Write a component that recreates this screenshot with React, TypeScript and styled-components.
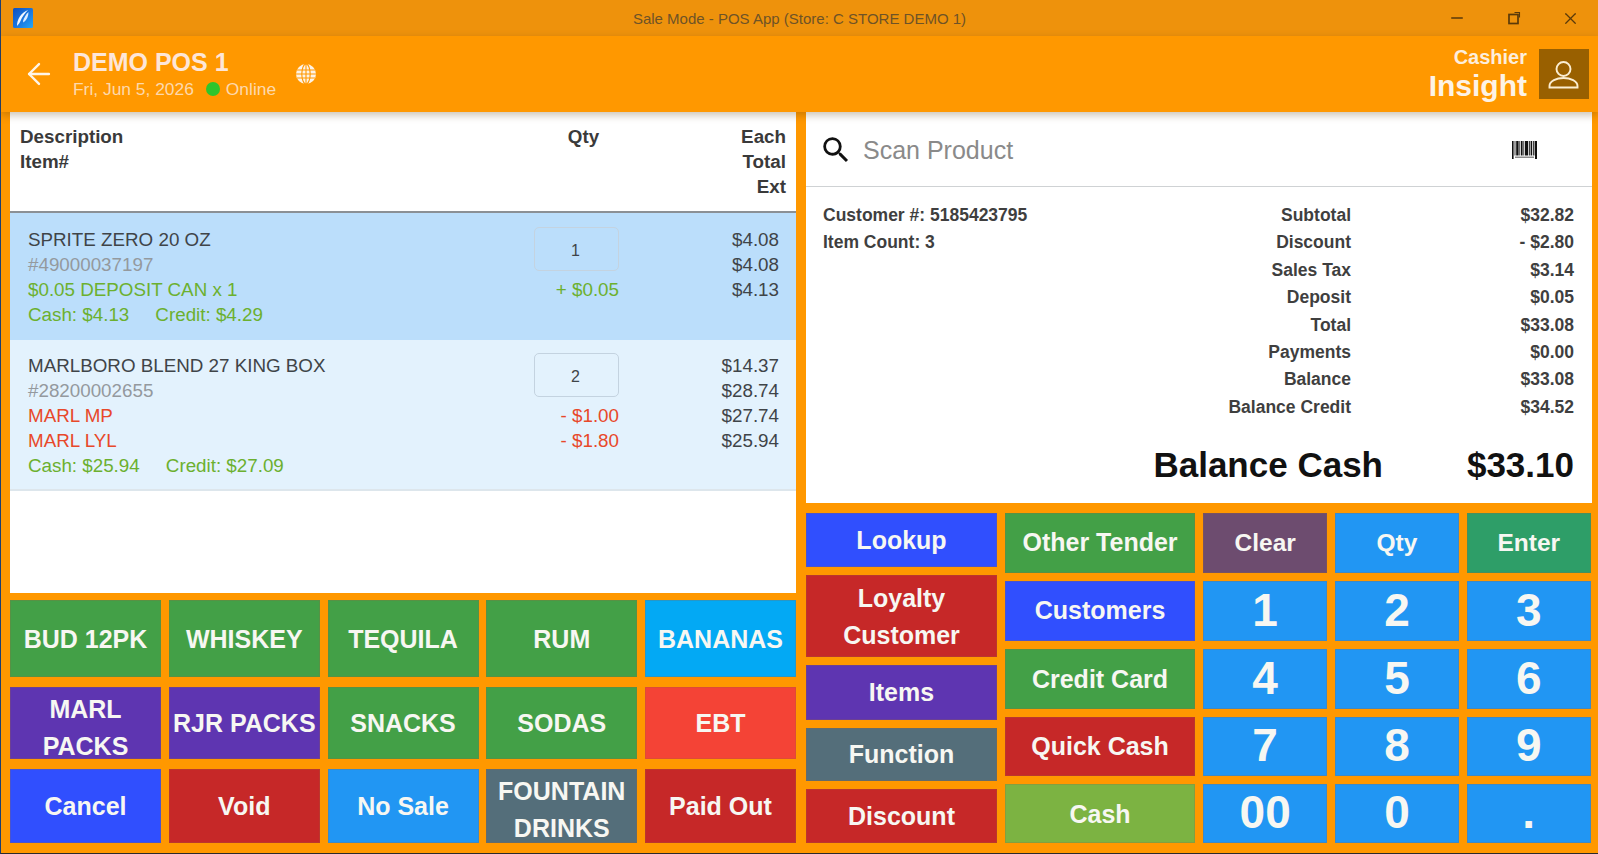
import React from "react";
import styled, { createGlobalStyle } from "styled-components";
import { ArrowLeft, Minus, X } from "lucide-react";
import { MdSearch } from "react-icons/md";

const GlobalStyle = createGlobalStyle`
	html, body {
		margin: 0;
		padding: 0;
		height: 100%;
		background: #ff9800;
		overflow: hidden;
	}
	* {
		box-sizing: border-box;
	}
`;

const Win = styled.div`
	width: 1598px;
	height: 854px;
	display: flex;
	flex-direction: column;
	background: #ff9800;
	border-left: 1px solid #1c3f73;
	border-bottom: 1px solid #2a2a2a;
	font-family: "Liberation Sans", Arial, sans-serif;
`;

const TitleBar = styled.div`
	height: 36px;
	flex: none;
	display: grid;
	grid-template-columns: 1fr auto 1fr;
	align-items: center;
	background: #ee920c;
	padding: 0 12px;
`;

const TitleText = styled.div`
	font-size: 15px;
	color: #6e5327;
`;

const WinButtons = styled.div`
	display: flex;
	justify-content: flex-end;
	color: #5a3a0a;
	margin-right: -13px;
`;

const WinButton = styled.div`
	width: 57px;
	height: 20px;
	display: flex;
	align-items: center;
	justify-content: center;
`;

const Header = styled.div`
	height: 76px;
	flex: none;
	display: flex;
	align-items: center;
	background: #ff9800;
	box-shadow: 0 3px 8px rgba(90, 60, 10, 0.32);
	position: relative;
	z-index: 1;
	padding: 0 8px 0 21px;
	color: #fff5e8;
`;

const HeaderInfo = styled.div`
	margin-left: 17px;
	display: flex;
	flex-direction: column;
	gap: 3px;
`;

const StoreName = styled.div`
	font-size: 25px;
	font-weight: 700;
	line-height: 27px;
	color: #fde6d8;
`;

const StatusRow = styled.div`
	display: flex;
	align-items: center;
	font-size: 17.4px;
	line-height: 20px;
	color: #fdd9ad;
`;

const Dot = styled.span`
	width: 14px;
	height: 14px;
	border-radius: 50%;
	background: #2fc52c;
	margin: 0 6px 0 12px;
`;

const GlobeWrap = styled.div`
	margin-left: 20px;
	display: flex;
`;

const Spacer = styled.div`
	flex: 1;
`;

const CashierInfo = styled.div`
	display: flex;
	flex-direction: column;
	align-items: flex-end;
	margin-right: 12px;
`;

const CashierLabel = styled.div`
	font-size: 20px;
	font-weight: 700;
	line-height: 23px;
	color: #fdeedd;
`;

const CashierName = styled.div`
	font-size: 30px;
	font-weight: 700;
	line-height: 33px;
	color: #fdf3e6;
`;

const Avatar = styled.div`
	width: 50px;
	height: 50px;
	margin-right: 1px;
	background: #996000;
	display: flex;
	color: #fbeed2;
`;

const Body = styled.div`
	flex: 1;
	display: grid;
	grid-template-columns: 786px 786px;
	column-gap: 10px;
	padding: 0 0 10px 9px;
	min-height: 0;
`;

const Column = styled.div`
	display: flex;
	flex-direction: column;
	min-height: 0;
`;

const Ticket = styled.div`
	height: 481px;
	flex: none;
	background: #fff;
	display: flex;
	flex-direction: column;
`;

const TicketHead = styled.div`
	height: 101px;
	flex: none;
	display: grid;
	grid-template-columns: 1fr 120px 150px;
	padding: 12px 10px 0 10px;
	border-bottom: 2px solid #8b9095;
	font-size: 18.8px;
	font-weight: 700;
	line-height: 25px;
	color: #3a3a3a;
`;

const HeadQty = styled.div`
	text-align: center;
	padding-left: 15px;
`;

const HeadRight = styled.div`
	text-align: right;
`;

const ItemRow = styled.div<{ $selected?: boolean; $height: number; $top: number }>`
	height: ${(p) => p.$height}px;
	flex: none;
	display: grid;
	grid-template-columns: 1fr 85px 160px;
	padding: ${(p) => p.$top}px 17px 0 18px;
	background: ${(p) => (p.$selected ? "#bbdefb" : "#e3f2fd")};
	border-bottom: ${(p) => (p.$selected ? "none" : "2px solid #dde6ec")};
	font-size: 18.8px;
	line-height: 25px;
	color: #3f4448;
`;

const Line = styled.div<{ $tone?: "green" | "red" | "grey" }>`
	white-space: pre;
	color: ${(p) =>
		p.$tone === "green"
			? "#6cb02f"
			: p.$tone === "red"
				? "#e8482a"
				: p.$tone === "grey"
					? "#94999e"
					: "inherit"};
`;

const Prices = styled.div`
	text-align: right;
`;

const QtyCol = styled.div`
	text-align: right;
`;

const QtyBox = styled.div`
	height: 44px;
	margin: 0 0 6px;
	border: 1px solid #c4d3e0;
	border-radius: 5px;
	display: flex;
	align-items: center;
	justify-content: center;
	font-size: 16px;
	padding: 2px 2px 0 0;
`;

const Tiles = styled.div`
	display: grid;
	grid-template-columns: repeat(5, 151px);
	grid-template-rows: 77px 72px 74px;
	column-gap: 7.75px;
	row-gap: 10px;
	margin-top: 7px;
`;

const Tile = styled.div<{ $bg: string; $size?: number; $drop?: number; $lift?: number }>`
	background: ${(p) => p.$bg};
	display: flex;
	align-items: center;
	justify-content: center;
	text-align: center;
	color: #f7f7f2;
	font-size: ${(p) => p.$size ?? 25}px;
	font-weight: 700;
	line-height: 37px;
	padding: ${(p) => p.$drop ?? 1}px 0 ${(p) => p.$lift ?? 0}px;
	overflow: hidden;
	box-shadow: inset 0 0 0 1px rgba(150, 100, 60, 0.25);
`;

const Scan = styled.div`
	height: 75px;
	flex: none;
	background: #fff;
	border-bottom: 1px solid #cfd2d4;
	display: flex;
	align-items: center;
	justify-content: space-between;
	padding: 2px 54px 0 13px;
`;

const ScanLeft = styled.div`
	display: flex;
	align-items: center;
	color: #111;
`;

const ScanText = styled.div`
	margin-left: 10px;
	font-size: 25px;
	color: #8a8a8a;
`;

const Summary = styled.div`
	height: 316px;
	flex: none;
	background: #fff;
	padding: 15px 18px 0 17px;
	display: flex;
	flex-direction: column;
`;

const SummaryTop = styled.div`
	display: flex;
	justify-content: space-between;
`;

const InfoCol = styled.div`
	font-size: 17.5px;
	font-weight: 700;
	line-height: 27.4px;
	color: #3f3f3f;
`;

const Totals = styled.div`
	display: grid;
	grid-template-columns: 240px 223px;
	font-size: 17.5px;
	font-weight: 700;
	line-height: 27.4px;
	color: #3f3f3f;
	text-align: right;
`;

const BalanceRow = styled.div`
	margin-top: 23px;
	display: grid;
	grid-template-columns: auto 191px;
	justify-content: end;
	font-size: 35px;
	font-weight: 700;
	line-height: 42px;
	color: #111;
	text-align: right;
`;

const Keys = styled.div`
	flex: 1;
	display: grid;
	grid-template-columns: 191px 190px 1fr;
	column-gap: 8px;
	margin-top: 10px;
`;

const KeyStack = styled.div<{ $rows: string }>`
	display: grid;
	grid-template-rows: ${(p) => p.$rows};
	row-gap: 8px;
`;

const Numpad = styled.div`
	display: grid;
	grid-template-columns: repeat(3, 124.3px);
	grid-template-rows: 60px 60px 60px 59px 59px;
	column-gap: 7.5px;
	row-gap: 8px;
`;

const NumKey = styled(Tile)`
	line-height: 1;
	padding: 0 0 3px;
`;

// x and width of each black bar
const bars = [
	[0, 1.6], [2.6, 0.8], [4.2, 2.4], [7.4, 0.8], [9, 1.6], [11.4, 0.8],
	[13, 3.2], [17, 0.8], [18.6, 1.6], [21, 0.8], [22.6, 2.4],
];

const Barcode = () => (
	<svg width="26" height="19" viewBox="0 0 26 19">
		{bars.map(([x, w]) => (
			<rect key={x} x={x} y={0} width={w} height={18} fill="#111" />
		))}
		<rect x="2" y="14.5" width="21" height="3.5" fill="#fff" />
		<rect x="3" y="15.5" width="19" height="1.5" fill="#8a8a8a" />
	</svg>
);

const AppIcon = () => (
	<svg width="20" height="20" viewBox="0 0 20 20">
		<defs>
			<linearGradient id="appIconFill" x1="0" y1="0" x2="1" y2="1">
				<stop offset="0" stopColor="#0d4fc0" />
				<stop offset="0.55" stopColor="#1a78e0" />
				<stop offset="1" stopColor="#25a8f5" />
			</linearGradient>
		</defs>
		<rect width="20" height="20" rx="1.5" fill="url(#appIconFill)" />
		<path d="M4 18 C4 11 8 5 15 2 C12 5 9 9 7.5 13 C6.5 15 5.5 16.5 4 18z" fill="#f2f8ff" />
		<path d="M10 13 C11 10 13 6 15.5 4 C15.5 8 14 12 10.5 14.5z" fill="#dcecff" />
	</svg>
);

const RestoreIcon = () => (
	<svg width="14" height="14" viewBox="0 0 14 14" fill="none" stroke="#5a3a0a">
		<rect x="2" y="3.5" width="9" height="9" strokeWidth="1.7" />
		<path d="M7.5 1.5h5v5" strokeWidth="1.1" />
	</svg>
);

const Globe = () => (
	<svg width="20" height="20" viewBox="0 0 20 20">
		<circle cx="10" cy="10" r="10" fill="#fdf3e6" />
		<g fill="none" stroke="#ff9800" strokeWidth="1.1">
			<ellipse cx="10" cy="10" rx="4.2" ry="10" />
			<path d="M10 0v20M1 6h18M0 10h20M1 14h18" />
		</g>
	</svg>
);

const PersonIcon = () => (
	<svg width="50" height="50" viewBox="0 0 50 50" fill="none" stroke="currentColor" strokeWidth="1.9">
		<circle cx="24.5" cy="20" r="7" />
		<path d="M10.5 38.5v-1.5c0-5 7-8 14-8s14 3 14 8v1.5z" />
	</svg>
);

const GREEN = "#43a047";
const PURPLE = "#5e35b1";
const BLUE = "#304ffe";
const RED = "#c62828";
const SKY = "#2196f3";
const SLATE = "#546e7a";

type Key = { label: string; bg: string; drop?: number; lift?: number };

const tiles: Key[] = [
	{ label: "BUD 12PK", bg: GREEN },
	{ label: "WHISKEY", bg: GREEN },
	{ label: "TEQUILA", bg: GREEN },
	{ label: "RUM", bg: GREEN },
	{ label: "BANANAS", bg: "#03a9f4" },
	{ label: "MARL PACKS", bg: PURPLE, drop: 10 },
	{ label: "RJR PACKS", bg: PURPLE },
	{ label: "SNACKS", bg: GREEN },
	{ label: "SODAS", bg: GREEN },
	{ label: "EBT", bg: "#f44336" },
	{ label: "Cancel", bg: BLUE },
	{ label: "Void", bg: RED },
	{ label: "No Sale", bg: SKY },
	{ label: "FOUNTAIN DRINKS", bg: SLATE, drop: 8 },
	{ label: "Paid Out", bg: RED },
];

const totals = [
	["Subtotal", "$32.82"],
	["Discount", "- $2.80"],
	["Sales Tax", "$3.14"],
	["Deposit", "$0.05"],
	["Total", "$33.08"],
	["Payments", "$0.00"],
	["Balance", "$33.08"],
	["Balance Credit", "$34.52"],
];

const sideKeys: Key[] = [
	{ label: "Lookup", bg: BLUE },
	{ label: "Loyalty Customer", bg: RED },
	{ label: "Items", bg: PURPLE, drop: 0 },
	{ label: "Function", bg: SLATE, drop: 0 },
	{ label: "Discount", bg: RED, drop: 0 },
];

const tenderKeys: Key[] = [
	{ label: "Other Tender", bg: GREEN, drop: 0, lift: 2 },
	{ label: "Customers", bg: BLUE, drop: 0, lift: 2 },
	{ label: "Credit Card", bg: GREEN, drop: 0 },
	{ label: "Quick Cash", bg: RED, drop: 0 },
	{ label: "Cash", bg: "#7cb342", drop: 2 },
];

const topKeys: Key[] = [
	{ label: "Clear", bg: "#6d4c6f", drop: 0, lift: 2 },
	{ label: "Qty", bg: SKY, drop: 0, lift: 2 },
	{ label: "Enter", bg: "#2e9e68", drop: 0, lift: 2 },
];

const digits = ["1", "2", "3", "4", "5", "6", "7", "8", "9", "00", "0", "."];

export default function App() {
	return (
		<Win>
			<GlobalStyle />
			<TitleBar>
				<AppIcon />
				<TitleText>Sale Mode - POS App (Store: C STORE DEMO 1)</TitleText>
				<WinButtons>
					<WinButton>
						<Minus size={18} strokeWidth={2} />
					</WinButton>
					<WinButton>
						<RestoreIcon />
					</WinButton>
					<WinButton>
						<X size={19} strokeWidth={1.6} />
					</WinButton>
				</WinButtons>
			</TitleBar>
			<Header>
				<ArrowLeft size={34} strokeWidth={1.7} color="#fff5e8" />
				<HeaderInfo>
					<StoreName>DEMO POS 1</StoreName>
					<StatusRow>
						Fri, Jun 5, 2026
						<Dot />
						Online
					</StatusRow>
				</HeaderInfo>
				<GlobeWrap>
					<Globe />
				</GlobeWrap>
				<Spacer />
				<CashierInfo>
					<CashierLabel>Cashier</CashierLabel>
					<CashierName>Insight</CashierName>
				</CashierInfo>
				<Avatar>
					<PersonIcon />
				</Avatar>
			</Header>
			<Body>
				<Column>
					<Ticket>
						<TicketHead>
							<div>
								Description
								<br />
								Item#
							</div>
							<HeadQty>Qty</HeadQty>
							<HeadRight>
								Each
								<br />
								Total
								<br />
								Ext
							</HeadRight>
						</TicketHead>
						<ItemRow $selected $height={127} $top={14}>
							<div>
								<Line>SPRITE ZERO 20 OZ</Line>
								<Line $tone="grey">#49000037197</Line>
								<Line $tone="green">$0.05 DEPOSIT CAN x 1</Line>
								<Line $tone="green">{"Cash: $4.13     Credit: $4.29"}</Line>
							</div>
							<QtyCol>
								<QtyBox>1</QtyBox>
								<Line $tone="green">+ $0.05</Line>
							</QtyCol>
							<Prices>
								<Line>$4.08</Line>
								<Line>$4.08</Line>
								<Line>$4.13</Line>
							</Prices>
						</ItemRow>
						<ItemRow $height={151} $top={13}>
							<div>
								<Line>MARLBORO BLEND 27 KING BOX</Line>
								<Line $tone="grey">#28200002655</Line>
								<Line $tone="red">MARL MP</Line>
								<Line $tone="red">MARL LYL</Line>
								<Line $tone="green">{"Cash: $25.94     Credit: $27.09"}</Line>
							</div>
							<QtyCol>
								<QtyBox>2</QtyBox>
								<Line $tone="red">- $1.00</Line>
								<Line $tone="red">- $1.80</Line>
							</QtyCol>
							<Prices>
								<Line>$14.37</Line>
								<Line>$28.74</Line>
								<Line>$27.74</Line>
								<Line>$25.94</Line>
							</Prices>
						</ItemRow>
					</Ticket>
					<Tiles>
						{tiles.map((t) => (
							<Tile key={t.label} $bg={t.bg} $drop={t.drop}>
								{t.label}
							</Tile>
						))}
					</Tiles>
				</Column>
				<Column>
					<Scan>
						<ScanLeft>
							<MdSearch size={34} />
							<ScanText>Scan Product</ScanText>
						</ScanLeft>
						<Barcode />
					</Scan>
					<Summary>
						<SummaryTop>
							<InfoCol>
								<div>Customer #: 5185423795</div>
								<div>Item Count: 3</div>
							</InfoCol>
							<Totals>
								{totals.map(([name, value]) => (
									<React.Fragment key={name}>
										<div>{name}</div>
										<div>{value}</div>
									</React.Fragment>
								))}
							</Totals>
						</SummaryTop>
						<BalanceRow>
							<div>Balance Cash</div>
							<div>$33.10</div>
						</BalanceRow>
					</Summary>
					<Keys>
						<KeyStack $rows="54px 82px 55px 53px 54px">
							{sideKeys.map((k) => (
								<Tile key={k.label} $bg={k.bg} $drop={k.drop}>
									{k.label}
								</Tile>
							))}
						</KeyStack>
						<KeyStack $rows="60px 60px 60px 59px 59px">
							{tenderKeys.map((k) => (
								<Tile key={k.label} $bg={k.bg} $drop={k.drop} $lift={k.lift}>
									{k.label}
								</Tile>
							))}
						</KeyStack>
						<Numpad>
							{topKeys.map((k) => (
								<Tile key={k.label} $bg={k.bg} $drop={k.drop} $lift={k.lift} $size={24.5}>
									{k.label}
								</Tile>
							))}
							{digits.map((d) => (
								<NumKey key={d} $bg={SKY} $size={46}>
									{d}
								</NumKey>
							))}
						</Numpad>
					</Keys>
				</Column>
			</Body>
		</Win>
	);
}
